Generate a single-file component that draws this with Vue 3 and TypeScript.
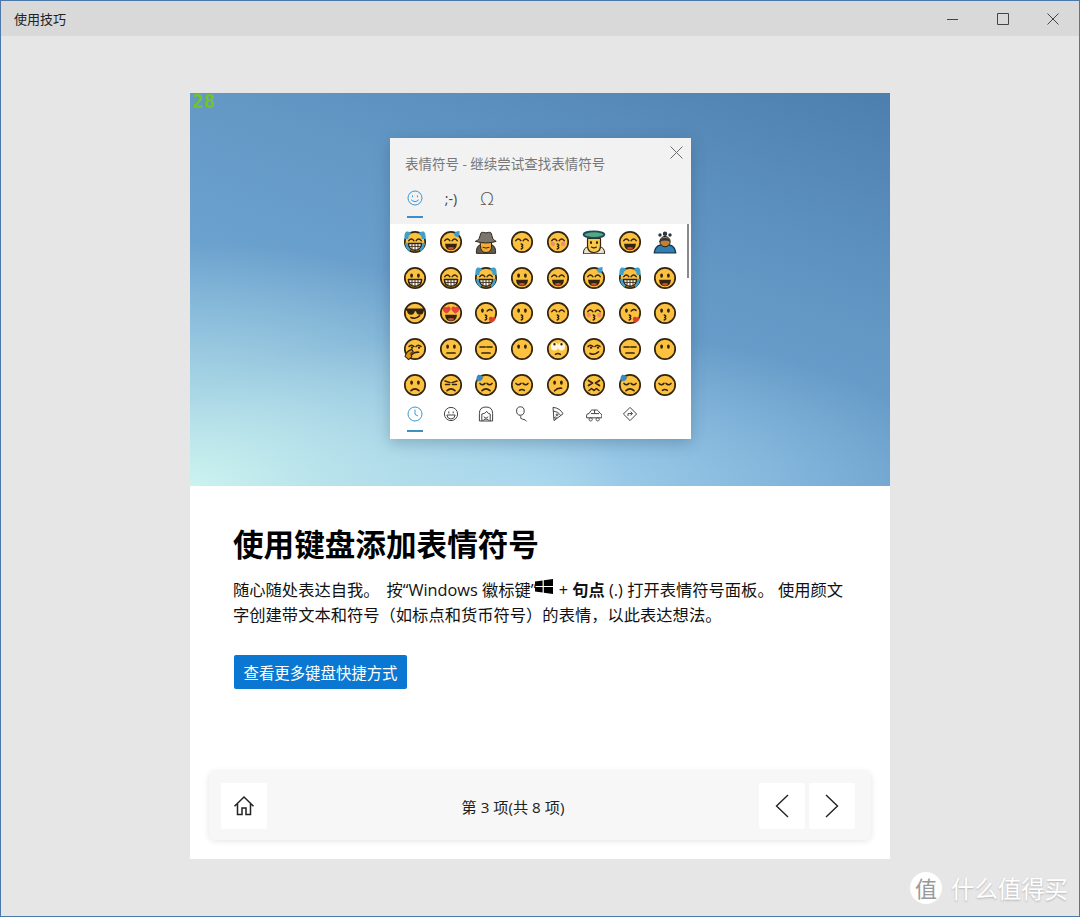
<script setup lang="ts">
type Shape = { d: string; fill?: string; stroke?: string; w?: number };

const INK = "#33240f";
const BLUE = "#3f9fc9";
const circle = (x: number, y: number, r: number) => `M${x - r} ${y}a${r} ${r} 0 1 0 ${r * 2} 0a${r} ${r} 0 1 0 ${-r * 2} 0z`;
const oval = (x: number, y: number, rx: number, ry: number) => `M${x - rx} ${y}a${rx} ${ry} 0 1 0 ${rx * 2} 0a${rx} ${ry} 0 1 0 ${-rx * 2} 0z`;
const line = (d: string, w = 1.5): Shape => ({ d, stroke: INK, w });
const solid = (d: string, fill = INK): Shape => ({ d, fill });

const eyes: Record<string, Shape[]> = {
  dot: [solid(oval(8.6, 9.6, 1.4, 2.2) + oval(15.4, 9.6, 1.4, 2.2))],
  arc: [line("M5.8 10.6q2.6-3.2 5 0M13.2 10.6q2.4-3.2 5 0")],
  flat: [line("M6 10h5.2M12.8 10h5.2", 1.6)],
  sad: [line("M6 10.4q2.4 2.6 5 0M13 10.4q2.6 2.6 5 0")],
  angry: [line("M6 8l5 1.6M18 8l-5 1.6M6.5 11.5h4M13.5 11.5h4")],
  cross: [line("M6.5 7.5l4 2.5-4 2.5M17.5 7.5l-4 2.5 4 2.5", 1.7)],
  wink: [solid(oval(8.4, 9.6, 1.4, 2.2)), line("M13.2 10q2.4-2.8 4.8-.6")],
  smirk: [line("M6 9.5q2.4-2.6 5 0M13 9.5q2.4-2.6 5 0"), solid(oval(9, 10.6, 1.2, 1.2) + oval(16, 10.6, 1.2, 1.2))],
  roll: [
    { d: oval(8.5, 9.6, 3.6, 4) + oval(15.5, 9.6, 3.6, 4), fill: "#fff8e2" },
    solid(circle(8.5, 7.2, 1.2) + circle(15.5, 7.2, 1.2)),
  ],
  shades: [solid("M1.8 7.4h20.4v2l-1.4.4q-.5 4-4 4-3 0-3.8-3.6h-1.2q-.8 3.6-3.8 3.6-3.5 0-4-4l-1.4-.4z")],
  hearts: [
    solid("M3.8 7.4c1.2-2.6 3.4-1.8 3.8-.8.8-1.2 3.2-1.8 4 .6.6 2.2-3 4.8-4 5.2-1.2-.4-4.6-2.8-3.8-5zM12.4 7.2c.8-2.4 3.2-1.8 4-.6.4-1 2.6-1.8 3.8.8.8 2.2-2.6 4.6-3.8 5-1-.4-4.6-3-4-5.2z", "#e5443a"),
  ],
};

const mouths: Record<string, Shape[]> = {
  none: [],
  open: [solid("M6 13.8h12q-.6 6.4-6 6.4t-6-6.4z"), solid("M8.6 17.8q3.4-1.4 6.8 0-1.4 2-3.4 2t-3.4-2z", "#c9503f")],
  grin: [
    { d: "M5.4 13.4h13.2q-.2 6.8-6.6 6.8t-6.6-6.8z", fill: "#fff", stroke: INK, w: 1.5 },
    line("M6 16.4h12M9 13.8v5.4M12 13.8v6M15 13.8v5.4", 0.9),
  ],
  kiss: [line("M11.2 14q3 1 .4 2.4 2.6 1.2-.4 2.6", 1.4)],
  flat: [line("M8 16h8", 1.7)],
  frown: [line("M8 17.6q4-3.6 8 0", 1.6)],
  wry: [line("M8.6 17.8q3-3.2 7-2.6", 1.6)],
  smirk: [line("M8 16.4q5 2.2 8.6-1.6", 1.6)],
  small: [line("M9.4 17.4q2.6-1.8 5 0", 1.4)],
  zig: [line("M7 17.5l2.5-2 2.5 2 2.5-2 2.5 2", 1.6)],
};

const tears: Shape[] = [
  solid("M1.4 9q-.4-6 2-7.4 3-.6 5.4 2-3.4 1.4-3.6 5.4zM22.6 9q.4-6-2-7.4-3-.6-5.4 2 3.4 1.4 3.6 5.4z", BLUE),
  solid("M1.8 13.2l2.6-.6q.4 4.6 3.2 7l-1.6 1.8q-3.4-3-4.2-8.2zM22.2 13.2l-2.6-.6q-.4 4.6-3.2 7l1.6 1.8q3.4-3 4.2-8.2z", BLUE),
];
const sweatR: Shape[] = [solid("M14.6 3.4q3.2-2.6 6-2.4.6 3.6-1.4 5.8-3 1-4.6-3.4z", BLUE)];
const sweatL: Shape[] = [solid("M2.4 7.2q-.4-3.8 1.8-5.8 3.2.4 5 2.8-1 3.6-3.6 4z", "#3a8bbb")];
const blush: Shape[] = [solid(circle(6.8, 14, 2.2) + circle(17.2, 14, 2.2), "#f08e6e")];
const heart: Shape[] = [solid("M15 17.2c1-2.4 3-1.4 3.4-.6.8-1 3-1 3.2 1 0 2-3.2 4-4.2 4.4-1.2-.6-3-3-2.4-4.8z", "#dd3f2e")];
const hand: Shape[] = [{ d: "M2 19.4q1.6-5.6 6.8-7l1.4 2.2-2.4 1.8 1 3.4-3.2 2.8z", fill: "#d9941c", stroke: INK, w: 1.1 }];

const extras: Record<string, Shape[]> = { tears, sweatR, sweatL, heart, hand };

function face(eye: string, mouth: string, extra?: string): Shape[] {
  return [
    { d: circle(12, 12, 10.2), fill: "#fcc23f", stroke: INK, w: 1.7 },
    ...(extra === "blush" ? blush : []),
    ...eyes[eye],
    ...mouths[mouth],
    ...(extra && extra !== "blush" ? extras[extra] : []),
  ];
}

const spy: Shape[] = [
  { d: "M2.4 23q-.6-6.4 4-8.4h11.2q4.6 2 4 8.4z", fill: "#5f5a52", stroke: INK, w: 1 },
  { d: "M6.5 12h11v4q0 6.5-5.500 6.500t-5.500-6.500z", fill: "#f3ad36", stroke: INK, w: 1 },
  { d: "M1.8 11.4q4-1 4.4-6 .4-3.8 3.200-3 2.600 1 5.200 0 2.800-.8 3.200 3 .4 5 4.400 6-10.200 3.200-20.400 0z", fill: "#79766f", stroke: INK, w: 1 },
  line("M9 17.4q3 1.6 6 0", 1),
];
const angel: Shape[] = [
  { d: "M1.4 23.4q0-6.4 5-6.4h11.2q5 0 5 6.4z", fill: "#e8e2d2", stroke: INK, w: 1 },
  { d: "M5.5 8.5h13v7q0 7-6.5 7t-6.5-7z", fill: "#fac94a", stroke: INK, w: 1.2 },
  { d: oval(12, 4.6, 10.4, 3.2), fill: "#55a882", stroke: "#174a5e", w: 1.8 },
  solid(oval(9, 12.4, 1.1, 1.5) + oval(15, 12.4, 1.1, 1.5)),
  line("M9.4 17q2.6 1.8 5 0", 1.1),
];
const bow: Shape[] = [
  { d: "M1.2 22.8q1-6.8 6.2-7.8h9.2q5.200 1 6.200 7.800z", fill: "#2f7fb2", stroke: "#14384f", w: 1.3 },
  { d: circle(12, 11.6, 5.2), fill: "#c47f37", stroke: INK, w: 1 },
  { d: "M7.4 9.6q4.6-3.8 9.2 0l.4 2q-5-2-10 0z", fill: "#2a3644" },
  { d: circle(12, 3.8, 2.2) + circle(7, 5, 1.7) + circle(17, 5, 1.7), fill: "#2a3644" },
];

const emojiRows: Shape[][] = [
  face("arc", "grin", "tears"), face("arc", "open", "sweatR"), spy, face("arc", "kiss"),
  face("arc", "kiss", "blush"), angel, face("arc", "open"), bow,

  face("dot", "grin"), face("arc", "grin"), face("arc", "grin", "tears"), face("dot", "open"),
  face("arc", "open"), face("arc", "open", "sweatR"), face("arc", "grin", "tears"), face("dot", "open"),

  face("shades", "smirk"), face("hearts", "open"), face("wink", "kiss", "heart"), face("dot", "kiss"),
  face("arc", "kiss"), face("arc", "kiss", "blush"), face("wink", "kiss", "heart"), face("dot", "kiss"),

  face("smirk", "wry", "hand"), face("dot", "flat"), face("flat", "flat"), face("dot", "none"),
  face("roll", "small"), face("smirk", "smirk"), face("flat", "flat"), face("dot", "none"),

  face("dot", "frown"), face("angry", "frown"), face("sad", "frown", "sweatL"), face("sad", "small"),
  face("dot", "wry"), face("cross", "zig"), face("sad", "frown", "sweatL"), face("sad", "small"),
];

const categoryIcons: { d: string; active?: boolean }[] = [
  { d: circle(8, 8, 7) + "M8 3.6V8.4L11 10", active: true },
  { d: circle(8, 8, 6.6) + "M5.8 5.4v2M10.2 5.4v2M3.8 9h8.4q-.6 4-4.2 4T3.8 9z" },
  { d: "M1.4 15V7.5Q1.4 1 8 1t6.6 6.5V15zM3.8 15V8q3 0 5-2.6Q10 8 12.2 8v7M5.8 10.8q2.2 3 4.4 0M4.6 15q1-2 3.4-2t3.4 2" },
  { d: oval(6.4, 5, 3.8, 4.2) + "M6 9.4l1 1.2M6.6 10.6q-.6 2.2 2 2.6 3 .2 4 2.2" },
  { d: "M3 1.4q7 .6 10 6.4L4 14.6zM3.4 5q5 .6 7.4 4.4M7 8a.9.9 0 1 0 .1 0M5.4 11a.8.8 0 1 0 .1 0" },
  { d: "M.6 11.8V9.2q0-1.4 2.4-1.6l2-3q.4-.6 1.4-.6h4q1 0 1.6.7l2.4 2.9q1.4.2 1.4 1.6v2.6zM5 7.6h8M8.6 4v3.6M4.6 11.8a1.6 1.6 0 1 0 .1 0M11.6 11.8a1.6 1.6 0 1 0 .1 0" },
  { d: "M8 1.4L14.6 8 8 14.6 1.4 8zM6 10V7.6h4M8.6 5.8L10.6 7.6 8.6 9.4" },
];
</script>

<template>
  <div class="window">
    <header class="titlebar">
      <span class="app-title">使用技巧</span>
      <div class="win-buttons">
        <svg width="14" height="14" viewBox="0 0 14 14"><path d="M1 7.5h11" stroke="#444" fill="none" /></svg>
        <svg width="14" height="14" viewBox="0 0 14 14"><path d="M1.5 1.5h11v11h-11z" stroke="#444" fill="none" /></svg>
        <svg width="14" height="14" viewBox="0 0 14 14"><path d="M1.5 1.5l11 11M12.5 1.5l-11 11" stroke="#444" fill="none" /></svg>
      </div>
    </header>

    <main class="stage">
      <article class="card">
        <div class="hero">
          <span class="clock">28</span>
          <section class="picker">
            <div class="picker-head">
              <div class="picker-title">
                <span>表情符号 - 继续尝试查找表情符号</span>
                <svg class="picker-close" width="13" height="13" viewBox="0 0 13 13"><path d="M.5.5l12 12M12.5.5l-12 12" stroke="#6b6b6b" fill="none" /></svg>
              </div>
              <div class="picker-tabs">
                <span class="picker-tab active">
                  <svg width="16" height="16" viewBox="0 0 16 16" fill="none" stroke="#3d97cc" stroke-width="1">
                    <circle cx="8" cy="8" r="7" />
                    <path d="M5.5 5.4v1.8M10.5 5.4v1.8M4.2 9.8q3.8 3.6 7.6 0" />
                  </svg>
                </span>
                <span class="picker-tab">;-)</span>
                <span class="picker-tab omega">Ω</span>
              </div>
            </div>
            <div class="emoji-wrap">
              <div class="emoji-grid">
                <svg v-for="(shapes, i) in emojiRows" :key="i" class="emoji" width="24" height="24" viewBox="0 0 24 24">
                  <path
                    v-for="(s, j) in shapes"
                    :key="j"
                    :d="s.d"
                    :fill="s.fill ?? 'none'"
                    :stroke="s.stroke ?? 'none'"
                    :stroke-width="s.w ?? 1.4"
                    stroke-linecap="round"
                    stroke-linejoin="round"
                  />
                </svg>
              </div>
              <i class="picker-scroll"></i>
            </div>
            <div class="categories">
              <span v-for="(icon, i) in categoryIcons" :key="i" class="category" :class="{ active: icon.active }">
                <svg width="16" height="16" viewBox="0 0 16 16" fill="none" :stroke="icon.active ? '#3d97cc' : '#444'" stroke-width="1">
                  <path :d="icon.d" />
                </svg>
              </span>
            </div>
          </section>
        </div>

        <div class="content">
          <h1>使用键盘添加表情符号</h1>
          <p>
            随心随处表达自我。 &#8201;按“Windows 徽标键”<svg class="win-logo" width="18" height="15" viewBox="0 0 18 15"><path d="M0 2.6L7.6 1.4V7H0zM8.8 1.2L18 0V7H8.8zM0 8h7.6v5.6L0 12.4zM8.8 8H18v7l-9.2-1.2z" fill="#000" /></svg> + <b>句点</b> (.) 打开表情符号面板。 使用颜文字创建带文本和符号（如标点和货币符号）的表情，以此表达想法。
          </p>
          <button class="more" type="button">查看更多键盘快捷方式</button>
        </div>

        <nav class="pager">
          <button class="pager-btn" type="button" aria-label="主页">
            <svg width="22" height="22" viewBox="0 0 22 22" fill="none" stroke="#222" stroke-width="1.5">
              <path d="M1.5 11.2L11 2l9.5 9.2M4.5 9v10.500h4.500v-6.500h4v6.500h4.500V9" />
            </svg>
          </button>
          <span class="pager-label">第 3 项(共 8 项)</span>
          <div class="pager-arrows">
            <button class="pager-btn" type="button" aria-label="上一项">
              <svg width="14" height="24" viewBox="0 0 14 24" fill="none" stroke="#222" stroke-width="1.4"><path d="M13 1L1.5 12 13 23" /></svg>
            </button>
            <button class="pager-btn" type="button" aria-label="下一项">
              <svg width="14" height="24" viewBox="0 0 14 24" fill="none" stroke="#222" stroke-width="1.4"><path d="M1 1l11.5 11L1 23" /></svg>
            </button>
          </div>
        </nav>
      </article>
    </main>

    <div class="watermark">
      <span class="mark-badge">值</span>
      <span>什么值得买</span>
    </div>
  </div>
</template>

<style>
html, body { margin: 0; }
</style>

<style scoped>
.window {
  position: relative;
  box-sizing: border-box;
  width: 1080px;
  height: 917px;
  display: flex;
  flex-direction: column;
  overflow: hidden;
  border: 1px solid #4a78ab;
  background: #e6e6e6;
  font-family: "Open Sans", "Noto Sans CJK SC", sans-serif;
  color: #111;
}
.titlebar {
  flex: none;
  height: 35px;
  display: flex;
  align-items: center;
  justify-content: space-between;
  background: #d9d9d9;
}
.app-title { margin-left: 13px; font-size: 13px; color: #222; }
.win-buttons { display: flex; gap: 36px; margin-right: 19px; }

.stage { flex: 1; display: flex; justify-content: center; padding-top: 57px; }
.card {
  width: 700px;
  height: 766px;
  display: flex;
  flex-direction: column;
  background: #fff;
}
.hero {
  position: relative;
  flex: none;
  box-sizing: border-box;
  height: 393px;
  padding-top: 45px;
  display: flex;
  justify-content: center;
  background:
    radial-gradient(ellipse 62% 62% at 0% 100%, rgba(208, 246, 240, .95), rgba(208, 246, 240, 0)),
    radial-gradient(ellipse 60% 40% at 50% 100%, rgba(180, 224, 245, .75), rgba(180, 224, 245, 0)),
    linear-gradient(200deg, #4d7fae 0%, #6398c5 38%, #79b0dc 100%);
}
.clock {
  position: absolute;
  left: 2px;
  top: 0;
  font: 700 19px/17px "DejaVu Sans Mono", monospace;
  color: #74c326;
}
.picker {
  width: 301px;
  height: 301px;
  margin-left: 1px;
  display: flex;
  flex-direction: column;
  background: #fff;
  box-shadow: 0 4px 14px rgba(30, 60, 90, .28);
}
.picker-head { flex: none; height: 86px; background: #f2f2f2; }
.picker-title {
  position: relative;
  padding: 17px 0 0 15px;
  font-size: 13.5px;
  line-height: 18px;
  color: #777;
}
.picker-close { position: absolute; right: 8px; top: 8px; }
.picker-tabs { display: flex; margin-top: 7px; padding-left: 7px; }
.picker-tab {
  position: relative;
  width: 36px;
  height: 36px;
  display: flex;
  align-items: center;
  justify-content: center;
  font-size: 14px;
  color: #444;
}
.omega { font-size: 18px; font-weight: 300; color: #555; }
.picker-tab.active::after, .category.active::after {
  content: "";
  position: absolute;
  left: 10px;
  right: 10px;
  bottom: -2px;
  height: 2px;
  background: #3d8fc4;
}
.emoji-wrap { position: relative; flex: none; height: 179px; overflow: hidden; }
.emoji-grid {
  display: grid;
  grid-template-columns: repeat(8, 35.8px);
  grid-auto-rows: 35.7px;
  padding-left: 7px;
  place-items: center;
}
.emoji { display: block; }
.picker-scroll {
  position: absolute;
  right: 2px;
  top: 0;
  width: 2px;
  height: 54px;
  background: #8a8a8a;
}
.categories { display: flex; padding-left: 7px; }
.category {
  position: relative;
  width: 35.8px;
  height: 36px;
  padding-top: 3px;
  box-sizing: border-box;
  display: flex;
  justify-content: center;
}
.category.active::after { bottom: 7px; }

.content { flex: 1; padding: 38px 44px 0; }
h1 { margin: 0 0 0 -1px; font-size: 30.6px; line-height: 40px; font-weight: 700; color: #000; }
p { margin: 14px -6px 0 -1px; font-size: 16.3px; line-height: 25px; color: #111; }
p b { font-weight: 700; }
.win-logo { vertical-align: 2px; margin: 0 1px 0 -1px; }
.more {
  display: block;
  margin-top: 27px;
  width: 173px;
  height: 34px;
  padding: 0;
  border: 0;
  border-radius: 2px;
  background: #0a78d2;
  color: #fff;
  font: 15.4px "Open Sans", "Noto Sans CJK SC", sans-serif;
}

.pager {
  flex: none;
  box-sizing: border-box;
  height: 69px;
  margin: 0 19px 19px;
  padding: 12px 16px 12px 12px;
  display: flex;
  border-radius: 6px;
  background: #f7f7f7;
  box-shadow: 0 1px 6px rgba(0, 0, 0, .11);
}
.pager-arrows { display: flex; gap: 4px; }
.pager-btn {
  flex: none;
  width: 46px;
  height: 46px;
  padding: 0;
  border: 0;
  border-radius: 2px;
  background: #fff;
  display: flex;
  align-items: center;
  justify-content: center;
}
.pager-label { flex: 1; align-self: center; text-align: center; font-size: 15.2px; color: #222; }

.watermark {
  position: absolute;
  right: 11px;
  bottom: 11px;
  display: flex;
  align-items: center;
  gap: 9px;
  font-size: 23.4px;
  color: #fff;
  text-shadow: 0 1px 2px rgba(0, 0, 0, .22);
}
.mark-badge {
  width: 32px;
  height: 32px;
  border-radius: 50%;
  background: #fff;
  color: #999;
  text-shadow: none;
  font-size: 22px;
  line-height: 32px;
  text-align: center;
}
</style>
